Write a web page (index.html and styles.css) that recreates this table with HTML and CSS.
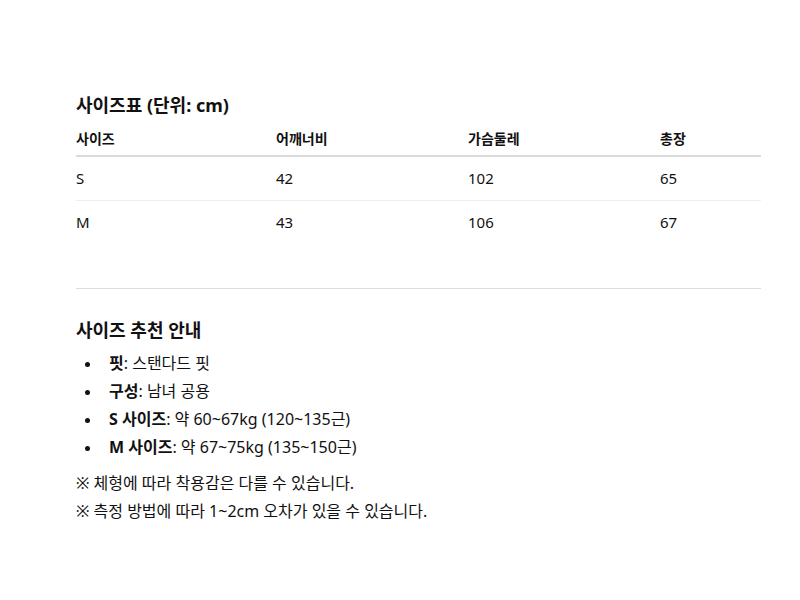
FILE: index.html
```html
<!DOCTYPE html>
<html lang="ko">
<head>
<meta charset="utf-8">
<link rel="stylesheet" href="styles.css">
</head>
<body>
<div class="wrap">
  <section class="size-table">
    <h2 class="title">사이즈표 (단위: cm)</h2>
    <table class="table">
      <thead>
        <tr><th class="c1">사이즈</th><th class="c2">어깨너비</th><th class="c3">가슴둘레</th><th>총장</th></tr>
      </thead>
      <tbody>
        <tr><td>S</td><td>42</td><td>102</td><td>65</td></tr>
        <tr><td>M</td><td>43</td><td>106</td><td>67</td></tr>
      </tbody>
    </table>
  </section>
  <hr class="divider">
  <section class="guide">
    <h2 class="title">사이즈 추천 안내</h2>
    <ul class="list">
      <li><strong>핏</strong>: 스탠다드 핏</li>
      <li><strong>구성</strong>: 남녀 공용</li>
      <li><strong>S 사이즈</strong>: 약 60~67kg (120~135근)</li>
      <li><strong>M 사이즈</strong>: 약 67~75kg (135~150근)</li>
    </ul>
    <p class="note">※ 체형에 따라 착용감은 다를 수 있습니다.</p>
    <p class="note">※ 측정 방법에 따라 1~2cm 오차가 있을 수 있습니다.</p>
  </section>
</div>
</body>
</html>
```
FILE: styles.css
```css
html, body {
  margin: 0;
  padding: 0;
  background: #fff;
}
body {
  font-family: "Noto Sans", "Noto Sans CJK KR", sans-serif;
  color: #111;
  font-size: 16px;
}
.wrap {
  width: 685px;
  margin-left: 76px;
  padding-top: 92px;
}
.title {
  margin: 0;
  font-size: 18px;
  font-weight: 700;
  line-height: 26px;
  color: #111;
}
.table {
  width: 100%;
  border-collapse: collapse;
  margin-top: 7px;
}
.table th {
  text-align: left;
  font-size: 14px;
  font-weight: 700;
  line-height: 20px;
  padding: 4px 0 6px;
  border-bottom: 2px solid #dadada;
}
.table td {
  font-size: 15px;
  line-height: 20px;
  padding: 11px 0 12px;
  border-bottom: 1px solid #efefef;
}
.table tbody tr:last-child td {
  border-bottom: 1px solid #fff;
}
.c1 { width: 200px; }
.c2 { width: 192px; }
.c3 { width: 192px; }
.divider {
  border: 0;
  border-top: 1px solid #ddd;
  margin: 43px 0 28px;
}
.list {
  list-style: none;
  margin: 6px 0 8px;
  padding-left: 9px;
}
.list li {
  line-height: 28px;
}
.list li::before {
  content: "";
  display: inline-block;
  width: 5px;
  height: 5px;
  border-radius: 50%;
  background: #111;
  margin-right: 19px;
  vertical-align: middle;
}
.list strong {
  font-weight: 700;
}
.note {
  margin: 0;
  line-height: 28px;
}
```
